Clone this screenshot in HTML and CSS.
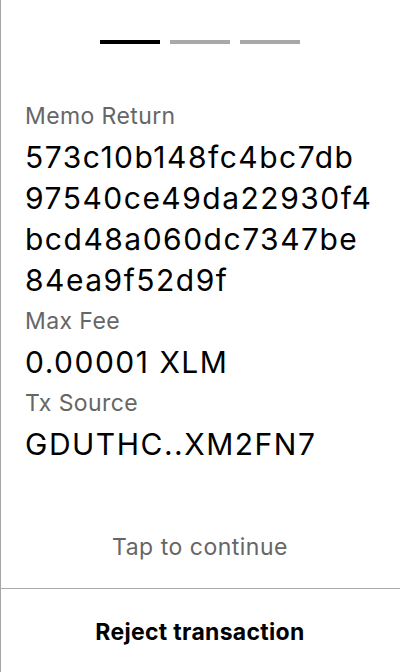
FILE: index.html
```html
<!DOCTYPE html>
<html>
<head>
<meta charset="utf-8">
<link rel="stylesheet" href="styles.css">
</head>
<body>
<div class="screen">
  <div class="steps">
    <span class="step active"></span>
    <span class="step"></span>
    <span class="step"></span>
  </div>
  <div class="fields">
    <div class="label">Memo Return</div>
    <div class="value">573c10b148fc4bc7db<br>97540ce49da22930f4<br>bcd48a060dc7347be<br>84ea9f52d9f</div>
    <div class="label">Max Fee</div>
    <div class="value">0.00001 XLM</div>
    <div class="label">Tx Source</div>
    <div class="value">GDUTHC..XM2FN7</div>
  </div>
  <div class="tap">Tap to continue</div>
  <div class="reject">Reject transaction</div>
</div>
</body>
</html>
```
FILE: styles.css
```css
html, body {
  margin: 0;
  padding: 0;
  background: #fff;
}
body {
  font-family: Inter, "Noto Sans", sans-serif;
  color: #000;
}
.screen {
  width: 400px;
  height: 672px;
  box-sizing: border-box;
  box-shadow: inset 1px 0 0 #a6a6a6;
  display: flex;
  flex-direction: column;
}
.steps {
  display: flex;
  justify-content: center;
  gap: 10px;
  padding-top: 40px;
}
.step {
  width: 60px;
  height: 4px;
  background: #a8a8a8;
}
.step.active {
  background: #000;
}
.fields {
  padding: 52px 0 0 25px;
  flex: 1;
}
.label {
  font-size: 23px;
  line-height: 41px;
  letter-spacing: 0.4px;
  color: #666;
}
.value {
  font-size: 30px;
  line-height: 41px;
  letter-spacing: 1.5px;
  color: #000;
}
.tap {
  text-align: center;
  font-size: 23px;
  line-height: 30px;
  letter-spacing: 0.5px;
  color: #666;
  padding-bottom: 26px;
}
.reject {
  border-top: 1px solid #aaa;
  text-align: center;
  font-size: 23px;
  font-weight: 700;
  line-height: 30px;
  letter-spacing: 0.3px;
  padding: 28px 0 25px;
}
```
